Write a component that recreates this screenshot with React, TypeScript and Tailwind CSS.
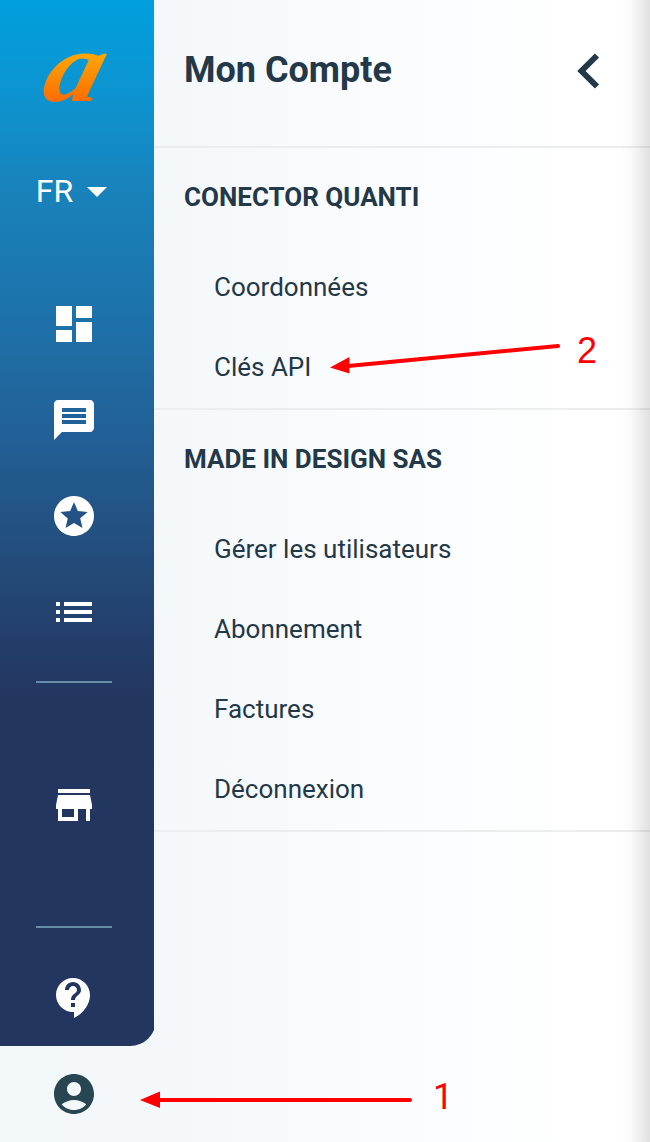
import type { ReactNode } from "react";
import {
    MdArrowDropDown,
    MdDashboard,
    MdMessage,
    MdStars,
    MdList,
    MdContactSupport,
} from "react-icons/md";

const sections = [
    {
        title: "CONECTOR QUANTI",
        items: ["Coordonnées", "Clés API"],
    },
    {
        title: "MADE IN DESIGN SAS",
        items: ["Gérer les utilisateurs", "Abonnement", "Factures", "Déconnexion"],
    },
];

function Logo() {
    return (
        <svg width="120" height="130" viewBox="0 0 120 130" className="block">
            <defs>
                <linearGradient id="logo" gradientUnits="userSpaceOnUse" x1="0" y1="-46" x2="0" y2="2">
                    <stop offset="0" stopColor="#ffa600" />
                    <stop offset="1" stopColor="#ff6a00" />
                </linearGradient>
            </defs>
            <text
                transform="translate(25 101) skewX(-15) scale(1.15 1)"
                fontFamily="Liberation Serif, serif"
                fontStyle="italic"
                fontWeight="700"
                fontSize="101"
                fill="url(#logo)"
            >
                a
            </text>
        </svg>
    );
}

function StoreIcon() {
    return (
        <svg width="48" height="48" viewBox="0 0 24 24" fill="currentColor">
            <path d="M20 4H4v2h16V4zm1 10v-2l-1-5H4l-1 5v2h1v6h10v-6h4v6h2v-6h1zm-9 4H6v-4h6v4z" />
        </svg>
    );
}

function AccountIcon() {
    return (
        <svg width="48" height="48" viewBox="0 0 24 24" fill="currentColor">
            <path d="M12 2C6.48 2 2 6.48 2 12s4.48 10 10 10 10-4.48 10-10S17.52 2 12 2zm0 4c1.93 0 3.5 1.57 3.5 3.5S13.93 13 12 13s-3.5-1.57-3.5-3.5S10.07 6 12 6zm0 14c-2.03 0-4.43-.82-6.14-2.88C7.55 15.8 9.68 15 12 15s4.45.8 6.14 2.12C16.43 19.18 14.03 20 12 20z" />
        </svg>
    );
}

function NavButton({ label, children }: { label: string; children: ReactNode }) {
    return (
        <button aria-label={label} className="block h-12 w-12">
            {children}
        </button>
    );
}

function Sidebar() {
    return (
        <aside className="w-[154px] shrink-0 overflow-hidden">
            <div className="h-[1046px] w-[156px] rounded-br-[26px] bg-[linear-gradient(180deg,#009fde_0px,#0d94d0_95px,#1982bb_190px,#1d73ab_310px,#225e93_450px,#234c7a_560px,#233e6a_640px,#233660_700px)] text-white">
                <div className="flex w-[148px] flex-col items-center">
                    <Logo />
                    <button className="mt-[37px] ml-[-3px] flex h-12 items-center text-[32px] leading-none">
                        <span className="pb-px pl-[12px]">FR</span>
                        <MdArrowDropDown size={48} />
                    </button>
                    <nav className="mt-[85px] flex flex-col gap-12">
                        <NavButton label="Tableau de bord"><MdDashboard size={48} /></NavButton>
                        <NavButton label="Messages"><MdMessage size={48} /></NavButton>
                        <NavButton label="Favoris"><MdStars size={48} /></NavButton>
                        <NavButton label="Liste"><MdList size={48} /></NavButton>
                    </nav>
                    <hr className="mt-[45px] h-[2px] w-[76px] border-0 bg-[#668da6]" />
                    <div className="mt-[98px]">
                        <NavButton label="Boutique"><StoreIcon /></NavButton>
                    </div>
                    <hr className="mt-[97px] h-[2px] w-[76px] border-0 bg-[#668da6]" />
                    <div className="mt-[46px]">
                        <NavButton label="Aide"><MdContactSupport size={48} /></NavButton>
                    </div>
                </div>
            </div>
            <div className="flex w-[148px] justify-center pt-6 text-[#284552]">
                <NavButton label="Mon compte"><AccountIcon /></NavButton>
            </div>
        </aside>
    );
}

function AccountPanel() {
    return (
        <main className="flex-1">
            <header className="flex h-[148px] items-start justify-between border-b-2 border-[#ebedee] pr-[49px] pl-[30px]">
                <h1 className="mt-[48px] text-[36px] leading-[44px] font-bold">Mon Compte</h1>
                <svg width="24" height="38" viewBox="0 0 24 38" className="mt-[52px]">
                    <path d="M20 3.500L4.500 19l15.500 15.500" fill="none" stroke="currentColor" strokeWidth="6" />
                </svg>
            </header>
            {sections.map((section) => (
                <section key={section.title} className="border-b-2 border-[#ebedee]">
                    <h2 className="flex h-[99px] items-center pb-[2px] pl-[30px] text-[26px] leading-none font-bold">
                        {section.title}
                    </h2>
                    <ul className="pb-px">
                        {section.items.map((item) => (
                            <li key={item} className="flex h-20 items-center pl-[60px] text-[26px] leading-none">
                                {item}
                            </li>
                        ))}
                    </ul>
                </section>
            ))}
        </main>
    );
}

// numbered steps laid over the menu
function Annotations() {
    return (
        <div className="pointer-events-none absolute inset-0 text-[#ff0000]">
            <svg width="650" height="1142" className="absolute inset-0">
                <g stroke="currentColor" strokeWidth="4" strokeLinecap="round">
                    <path d="M348 366L558 346" />
                    <path d="M158 1100h252" />
                </g>
                <path d="M330 367.500L349.500 357v16.500z" fill="currentColor" />
                <path d="M140 1100l20-8.500v16.500z" fill="currentColor" />
            </svg>
            <span className="absolute top-[331px] left-[577px] font-['Liberation_Sans',Arial,sans-serif] text-[36px] leading-[40px]">2</span>
            <span className="absolute top-[1077px] left-[433px] text-[36px] leading-[40px]">1</span>
        </div>
    );
}

export default function App() {
    return (
        <div className="relative flex h-[1142px] w-[650px] overflow-hidden bg-[linear-gradient(90deg,#f3f8fb_0px,#f4f8fb_154px,#fafcfe_380px,#ffffff_580px)] font-[Roboto,sans-serif] text-[#233848]">
            <Sidebar />
            <AccountPanel />
            <div className="pointer-events-none absolute inset-y-0 right-0 w-[30px] bg-[linear-gradient(90deg,rgba(0,0,0,0)_0%,rgba(0,0,0,0.02)_35%,rgba(0,0,0,0.12)_100%)]" />
            <Annotations />
        </div>
    );
}
